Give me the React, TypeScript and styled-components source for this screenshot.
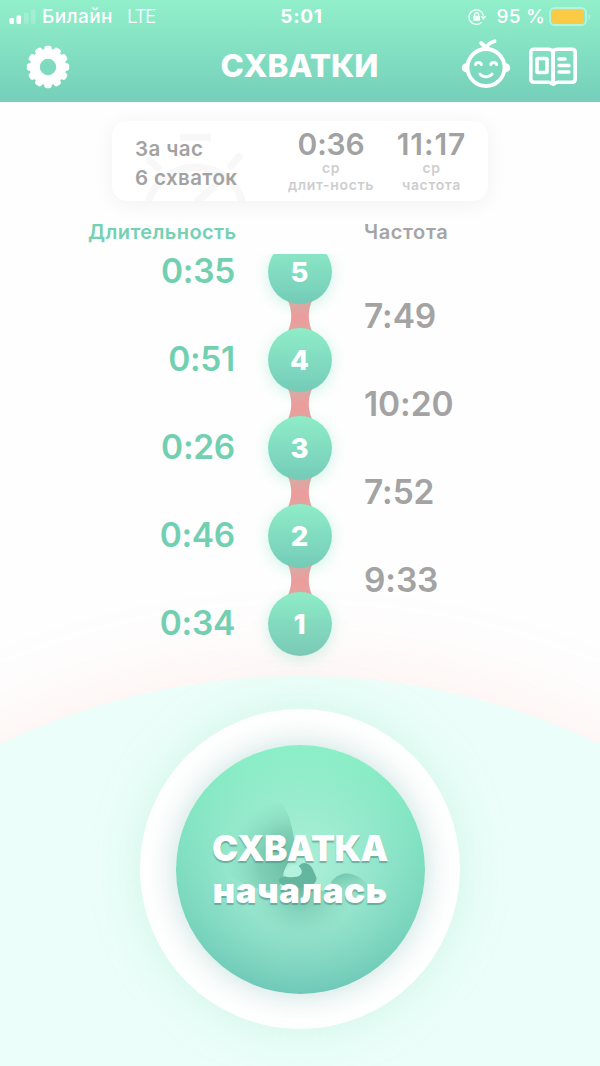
import React from "react";
import styled, { createGlobalStyle } from "styled-components";

const GlobalStyle = createGlobalStyle`
  * { box-sizing: border-box; }
  body { margin: 0; background: #fefefe; font-family: Inter, "Liberation Sans", sans-serif; }
`;

const Screen = styled.div`
  position: relative;
  display: flex;
  flex-direction: column;
  width: 600px;
  height: 1066px;
  overflow: hidden;
  background: #fefefe;
`;

const Header = styled.header`
  height: 102px;
  flex: none;
  display: flex;
  flex-direction: column;
  color: #fff;
  background: linear-gradient(#91f0ca, #75cfba);
`;

const StatusBar = styled.div`
  height: 32px;
  display: grid;
  grid-template-columns: 1fr auto 1fr;
  align-items: center;
  padding: 1px 8px 0 9px;
  font-size: 19px;
`;

const StatusGroup = styled.div<{ $end?: boolean }>`
  display: flex;
  align-items: center;
  justify-content: ${(p) => (p.$end ? "flex-end" : "flex-start")};
  white-space: nowrap;
`;

const Carrier = styled.span`
  margin-left: 6px;
  font-weight: 500;
  letter-spacing: 0.4px;
`;

const Network = styled.span`
  margin-left: 14px;
  font-weight: 300;
  letter-spacing: -1.4px;
`;

const Clock = styled.span`
  font-weight: 700;
  letter-spacing: 0.7px;
  padding-left: 2px;
`;

const Percent = styled.span`
  margin: 0 4px 0 10px;
  font-weight: 500;
  letter-spacing: 0.2px;
`;

const NavBar = styled.div`
  height: 70px;
  display: grid;
  grid-template-columns: 1fr auto 1fr;
  align-items: center;
  padding: 0 22px 0 26px;
`;

const Title = styled.h1`
  margin: 0 0 2px;
  padding-right: 5px;
  font-size: 31.5px;
  line-height: 40px;
  font-weight: 800;
  letter-spacing: 0;
`;

const NavActions = styled.div`
  display: flex;
  justify-content: flex-end;
  gap: 17px;
  padding-bottom: 6px;
`;

const SummaryCard = styled.section`
  position: relative;
  flex: none;
  width: 376px;
  height: 80px;
  margin: 19px 0 0 112px;
  padding: 0 3px 0 23px;
  display: flex;
  border-radius: 15px;
  background: #fff;
  box-shadow: 0 3px 22px rgba(0, 0, 0, 0.055);
`;

const Watermark = styled.svg`
  position: absolute;
  left: 0;
  top: 0;
`;

const SummaryText = styled.div`
  position: relative;
  width: 149px;
  padding-top: 13px;
  font-size: 20.5px;
  line-height: 29px;
  font-weight: 600;
  letter-spacing: 0.4px;
  color: #a2a2a2;
  white-space: nowrap;
`;

const Stat = styled.div<{ $width: number }>`
  width: ${(p) => p.$width}px;
  padding-top: 5px;
  display: flex;
  flex-direction: column;
  align-items: center;
  white-space: nowrap;
`;

const StatValue = styled.span<{ $track: number }>`
  font-size: 30px;
  line-height: 36px;
  margin-bottom: -2px;
  font-weight: 600;
  color: #a2a2a2;
  letter-spacing: ${(p) => p.$track}px;
`;

const StatLabel = styled.span`
  font-size: 14px;
  line-height: 16.5px;
  font-weight: 600;
  letter-spacing: 0.65px;
  color: #cecece;
`;

const columns = `
  display: grid;
  grid-template-columns: 235px 1fr 236px;
`;

const ColumnHeads = styled.div`
  ${columns}
  flex: none;
  height: 47px;
  padding-top: 18px;
  font-size: 20px;
  line-height: 26px;
  font-weight: 600;
`;

const Head = styled.span<{ $side: "left" | "right" }>`
  grid-column: ${(p) => (p.$side === "left" ? 1 : 3)};
  margin-right: ${(p) => (p.$side === "left" ? -1.5 : 0)}px;
  text-align: ${(p) => (p.$side === "left" ? "right" : "left")};
  color: ${(p) => (p.$side === "left" ? "#74d1b2" : "#a5a5a5")};
  letter-spacing: ${(p) => (p.$side === "left" ? "0.4px" : "0.6px")};
`;

const Timeline = styled.div`
  flex: none;
  height: 428px;
  overflow: hidden;
`;

const TimelineInner = styled.div`
  margin-top: -8px;
`;

const Row = styled.div`
  ${columns}
  height: 88px;
`;

const Duration = styled.span`
  height: 40px;
  margin-top: 11px;
  line-height: 40px;
  text-align: right;
  font-size: 33.5px;
  font-weight: 560;
  letter-spacing: -0.3px;
  color: #72d0b1;
`;

const Interval = styled.span`
  padding-top: 44px;
  line-height: 64px;
  height: 108px;
  font-size: 33.5px;
  font-weight: 560;
  letter-spacing: -0.1px;
  color: #a3a3a3;
`;

const Track = styled.div`
  display: flex;
  flex-direction: column;
  align-items: center;
`;

const Dot = styled.div<{ $cut: boolean }>`
  position: relative;
  z-index: 1;
  flex: none;
  width: 64px;
  height: 64px;
  border-radius: 50%;
  display: flex;
  align-items: center;
  justify-content: center;
  background: linear-gradient(#8fedc8, #74cbb8);
  box-shadow: 0 3px 15px rgba(125, 225, 195, 0.38);
  clip-path: ${(p) => (p.$cut ? "inset(14px -30px -30px -30px)" : "none")};
  color: #fff;
  font-size: 27.5px;
  font-weight: 800;
`;

const Link = styled.svg`
  display: block;
  flex: none;
  margin: -6px 0;
`;

const Hill = styled.div`
  position: absolute;
  z-index: 2;
  left: -396px;
  top: 676px;
  width: 1392px;
  height: 1392px;
  border-radius: 50%;
  background: #ecfef9;
  box-shadow: 0 0 90px rgba(255, 160, 150, 0.17);
`;

const Footer = styled.footer`
  position: relative;
  z-index: 3;
  flex: none;
  height: 390px;
  padding-top: 33px;
  display: flex;
  justify-content: center;
  align-items: flex-start;
`;

const Ring = styled.div`
  width: 320px;
  height: 320px;
  border-radius: 50%;
  display: flex;
  align-items: center;
  justify-content: center;
  background: #fff;
  box-shadow: 0 0 50px rgba(125, 220, 190, 0.26);
`;

const StartButton = styled.button`
  position: relative;
  width: 249px;
  height: 249px;
  padding: 0;
  border: 0;
  border-radius: 50%;
  font-family: inherit;
  color: #fff;
  background:
    radial-gradient(circle at 50% 50%, rgba(188, 246, 225, 0.75) 0, rgba(178, 242, 219, 0.5) 35%, rgba(160, 235, 210, 0) 70%),
    linear-gradient(#8bf0c7, #70c9b8);
  box-shadow: 0 0 32px rgba(90, 170, 155, 0.36);
`;

const Flower = styled.svg`
  position: absolute;
  left: 0;
  top: 0;
`;

const ButtonText = styled.span`
  position: relative;
  display: flex;
  flex-direction: column;
  align-items: center;
  line-height: 42px;
  text-shadow: 0 2px 1px rgba(75, 140, 130, 0.6);
`;

const ButtonLine = styled.span<{ $track: number }>`
  font-size: 35px;
  letter-spacing: ${(p) => p.$track}px;
  font-weight: 900;
`;

const SignalIcon = () => (
  <svg width="27" height="18" viewBox="0 0 27 18" fill="#fff">
    <rect x=".5" y="10" width="4.5" height="6" rx="1.2" />
    <rect x="7.500" y="7.500" width="4.5" height="8.500" rx="1.2" />
    <rect x="15" y="4.500" width="4.500" height="11.500" rx="1.2" opacity=".2" />
    <rect x="22" y="1.500" width="4.500" height="14.500" rx="1.2" opacity=".2" />
  </svg>
);

const LockIcon = () => (
  <svg width="19" height="18" viewBox="0 0 19 18" fill="none" stroke="#f0fff9" strokeWidth="1.4">
    <path d="M13.600 14.200A7.300 7.300 0 1 1 15.500 7.600" />
    <path d="M12.600 8.200h5.800l-2.900 3.800z" fill="#f0fff9" stroke="none" />
    <rect x="5.200" y="7.800" width="6.800" height="5" rx=".6" fill="#f0fff9" stroke="none" />
    <path d="M6.600 8V6.600a2 2 0 0 1 4 0V8" />
  </svg>
);

const BatteryIcon = () => (
  <svg width="43" height="20" viewBox="0 0 43 20" fill="none">
    <rect x="1" y="1" width="36" height="17" rx="4.5" stroke="#b5f3df" strokeWidth="1.8" />
    <rect x="3" y="3" width="32" height="13" rx="2.5" fill="#fbcb45" />
    <path d="M39.5 7v5.5c2.2-.8 2.2-4.7 0-5.5z" fill="#b5f3df" />
  </svg>
);

const teeth = Array.from({ length: 12 }, (_, i) => i * 30);

const GearIcon = () => (
  <svg width="44" height="44" viewBox="-22 -22 44 44">
    <circle r="13.2" fill="none" stroke="#fff" strokeWidth="10" />
    {teeth.map((a) => (
      <rect key={a} x="-3.7" y="-21.2" width="7.4" height="8" rx="2.6" fill="#fff" transform={`rotate(${a})`} />
    ))}
  </svg>
);

const BabyIcon = () => (
  <svg width="50" height="50" viewBox="0 0 50 50" fill="none" stroke="#fff" strokeLinecap="round" strokeLinejoin="round">
    <circle cx="25" cy="28.5" r="18.5" strokeWidth="3.8" />
    <path d="M5.500 25c-4.800 1.300-4.800 6.200 0 7.500zM44.500 25c4.800 1.300 4.800 6.200 0 7.500z" fill="#fff" strokeWidth="2.2" />
    <path d="M25.500 8.500c1-2.500 4-5 8-6.200M25 8.500l-4.800-4.500" strokeWidth="3.8" />
    <path d="M14.500 25.500c.8-2.800 5-2.800 5.800 0M29.800 25.500c.8-2.800 5-2.800 5.800 0M19 35c2.400 3.600 9.600 3.600 12 0" strokeWidth="3" />
  </svg>
);

const BookIcon = () => (
  <svg width="50" height="50" viewBox="0 0 50 50" fill="none" stroke="#fff" strokeLinecap="round" strokeLinejoin="round">
    <path d="M25 12.500c-1-2-3-2.200-5-2.200H6c-2.200 0-3.200 1.200-3.200 3.200v26.500c0 2 1 3.200 3.200 3.200h15c2 0 3 2 4.200 2s2.200-2 4.200-2H44c2.200 0 3.200-1.200 3.200-3.200V13.500c0-2-1-3.200-3.200-3.200H30c-2 0-4 .2-5 2.200z" strokeWidth="3.6" />
    <path d="M25 13v30" strokeWidth="4" />
    <rect x="9" y="19.500" width="10" height="14" rx="1" strokeWidth="3.6" />
    <path d="M31 20h6M31 26.500h10M31 33h10" strokeWidth="3.4" />
  </svg>
);

const entries = [
  { n: 5, duration: "0:35", interval: "7:49" },
  { n: 4, duration: "0:51", interval: "10:20" },
  { n: 3, duration: "0:26", interval: "7:52" },
  { n: 2, duration: "0:46", interval: "9:33" },
  { n: 1, duration: "0:34", interval: "" },
];

export default function App() {
  return (
    <>
      <GlobalStyle />
      <Screen>
        <Hill />
        <Header>
          <StatusBar>
            <StatusGroup>
              <SignalIcon />
              <Carrier>Билайн</Carrier>
              <Network>LTE</Network>
            </StatusGroup>
            <Clock>5:01</Clock>
            <StatusGroup $end>
              <LockIcon />
              <Percent>95 %</Percent>
              <BatteryIcon />
            </StatusGroup>
          </StatusBar>
          <NavBar>
            <GearIcon />
            <Title>СХВАТКИ</Title>
            <NavActions>
              <BabyIcon />
              <BookIcon />
            </NavActions>
          </NavBar>
        </Header>

        <SummaryCard>
          <Watermark width="150" height="80" viewBox="0 0 150 80" fill="none" stroke="#f8f8f8" strokeWidth="7.5">
            <path d="M68 16.500h31" strokeWidth="7.500" />
            <path d="M36.500 82a48 45 0 0 1 94 0M38 40l8 7M127 36l-8 9M86 80l18-17" strokeLinecap="round" />
          </Watermark>
          <SummaryText>
            За час
            <br />6 схваток
          </SummaryText>
          <Stat $width={94}>
            <StatValue $track={-0.2}>0:36</StatValue>
            <StatLabel>ср</StatLabel>
            <StatLabel>длит-ность</StatLabel>
          </Stat>
          <Stat $width={107}>
            <StatValue $track={0.9}>11:17</StatValue>
            <StatLabel>ср</StatLabel>
            <StatLabel>частота</StatLabel>
          </Stat>
        </SummaryCard>

        <ColumnHeads>
          <Head $side="left">Длительность</Head>
          <Head $side="right">Частота</Head>
        </ColumnHeads>

        <Timeline>
          <TimelineInner>
            {entries.map((e, i) => (
              <Row key={e.n}>
                <Duration>{e.duration}</Duration>
                <Track>
                  <Dot $cut={i === 0}>{e.n}</Dot>
                  {e.interval && (
                    <Link width="26" height="36" viewBox="0 0 26 36">
                      <path d="M-.5 0C5.800 11 5.800 25 -.5 36H26.500C20.200 25 20.200 11 26.500 0Z" fill="#ef9c9c" />
                    </Link>
                  )}
                </Track>
                <Interval>{e.interval}</Interval>
              </Row>
            ))}
          </TimelineInner>
        </Timeline>

        <Footer>
          <Ring>
            <StartButton>
              <Flower width="249" height="249" viewBox="175 744 250 250">
                <defs>
                  <radialGradient id="petalTop" cx="292" cy="864" r="68" gradientUnits="userSpaceOnUse">
                    <stop offset="0" stopColor="#5cb198" stopOpacity=".85" />
                    <stop offset=".5" stopColor="#6cc0a6" stopOpacity=".65" />
                    <stop offset="1" stopColor="#82d8bb" stopOpacity="0" />
                  </radialGradient>
                  <radialGradient id="petalBottom" cx="300" cy="888" r="54" gradientUnits="userSpaceOnUse">
                    <stop offset="0" stopColor="#5fb39d" stopOpacity=".9" />
                    <stop offset="1" stopColor="#82d5bc" stopOpacity="0" />
                  </radialGradient>
                  <linearGradient id="petalRight" x1="340" y1="872" x2="352" y2="905" gradientUnits="userSpaceOnUse">
                    <stop offset="0" stopColor="#65b9a2" stopOpacity=".8" />
                    <stop offset="1" stopColor="#8fdec5" stopOpacity="0" />
                  </linearGradient>
                </defs>
                <path d="M232 830C246 812 264 802 281 802C289 812 292 828 294 842C295 856 284 864 283 873C282 882 280 886 274 890C255 890 238 884 226 870Z" fill="url(#petalTop)" />
                <path d="M250 890C270 886 315 882 330 895C350 895 356 905 352 935C338 944 318 944 300 944C280 944 255 934 250 912Z" fill="url(#petalBottom)" />
                <path d="M331 881C343 866 362 874 369 888C364 898 350 907 332 900Z" fill="url(#petalRight)" />
                <path d="M298 866C302 860 309 862 312 868L316 877C317 884 308 887 300 887C290 888 280 886 278 880C280 874 288 876 295 876C302 876 303 870 298 866Z" fill="#65b69f" />
                <path d="M283 873C284 867 292 863 297 865C302 868 303 874 297 876C290 877 284 878 283 873Z" fill="#b3f2dd" />
              </Flower>
              <ButtonText>
                <ButtonLine $track={-0.5}>СХВАТКА</ButtonLine>
                <ButtonLine $track={0.4}>началась</ButtonLine>
              </ButtonText>
            </StartButton>
          </Ring>
        </Footer>
      </Screen>
    </>
  );
}
